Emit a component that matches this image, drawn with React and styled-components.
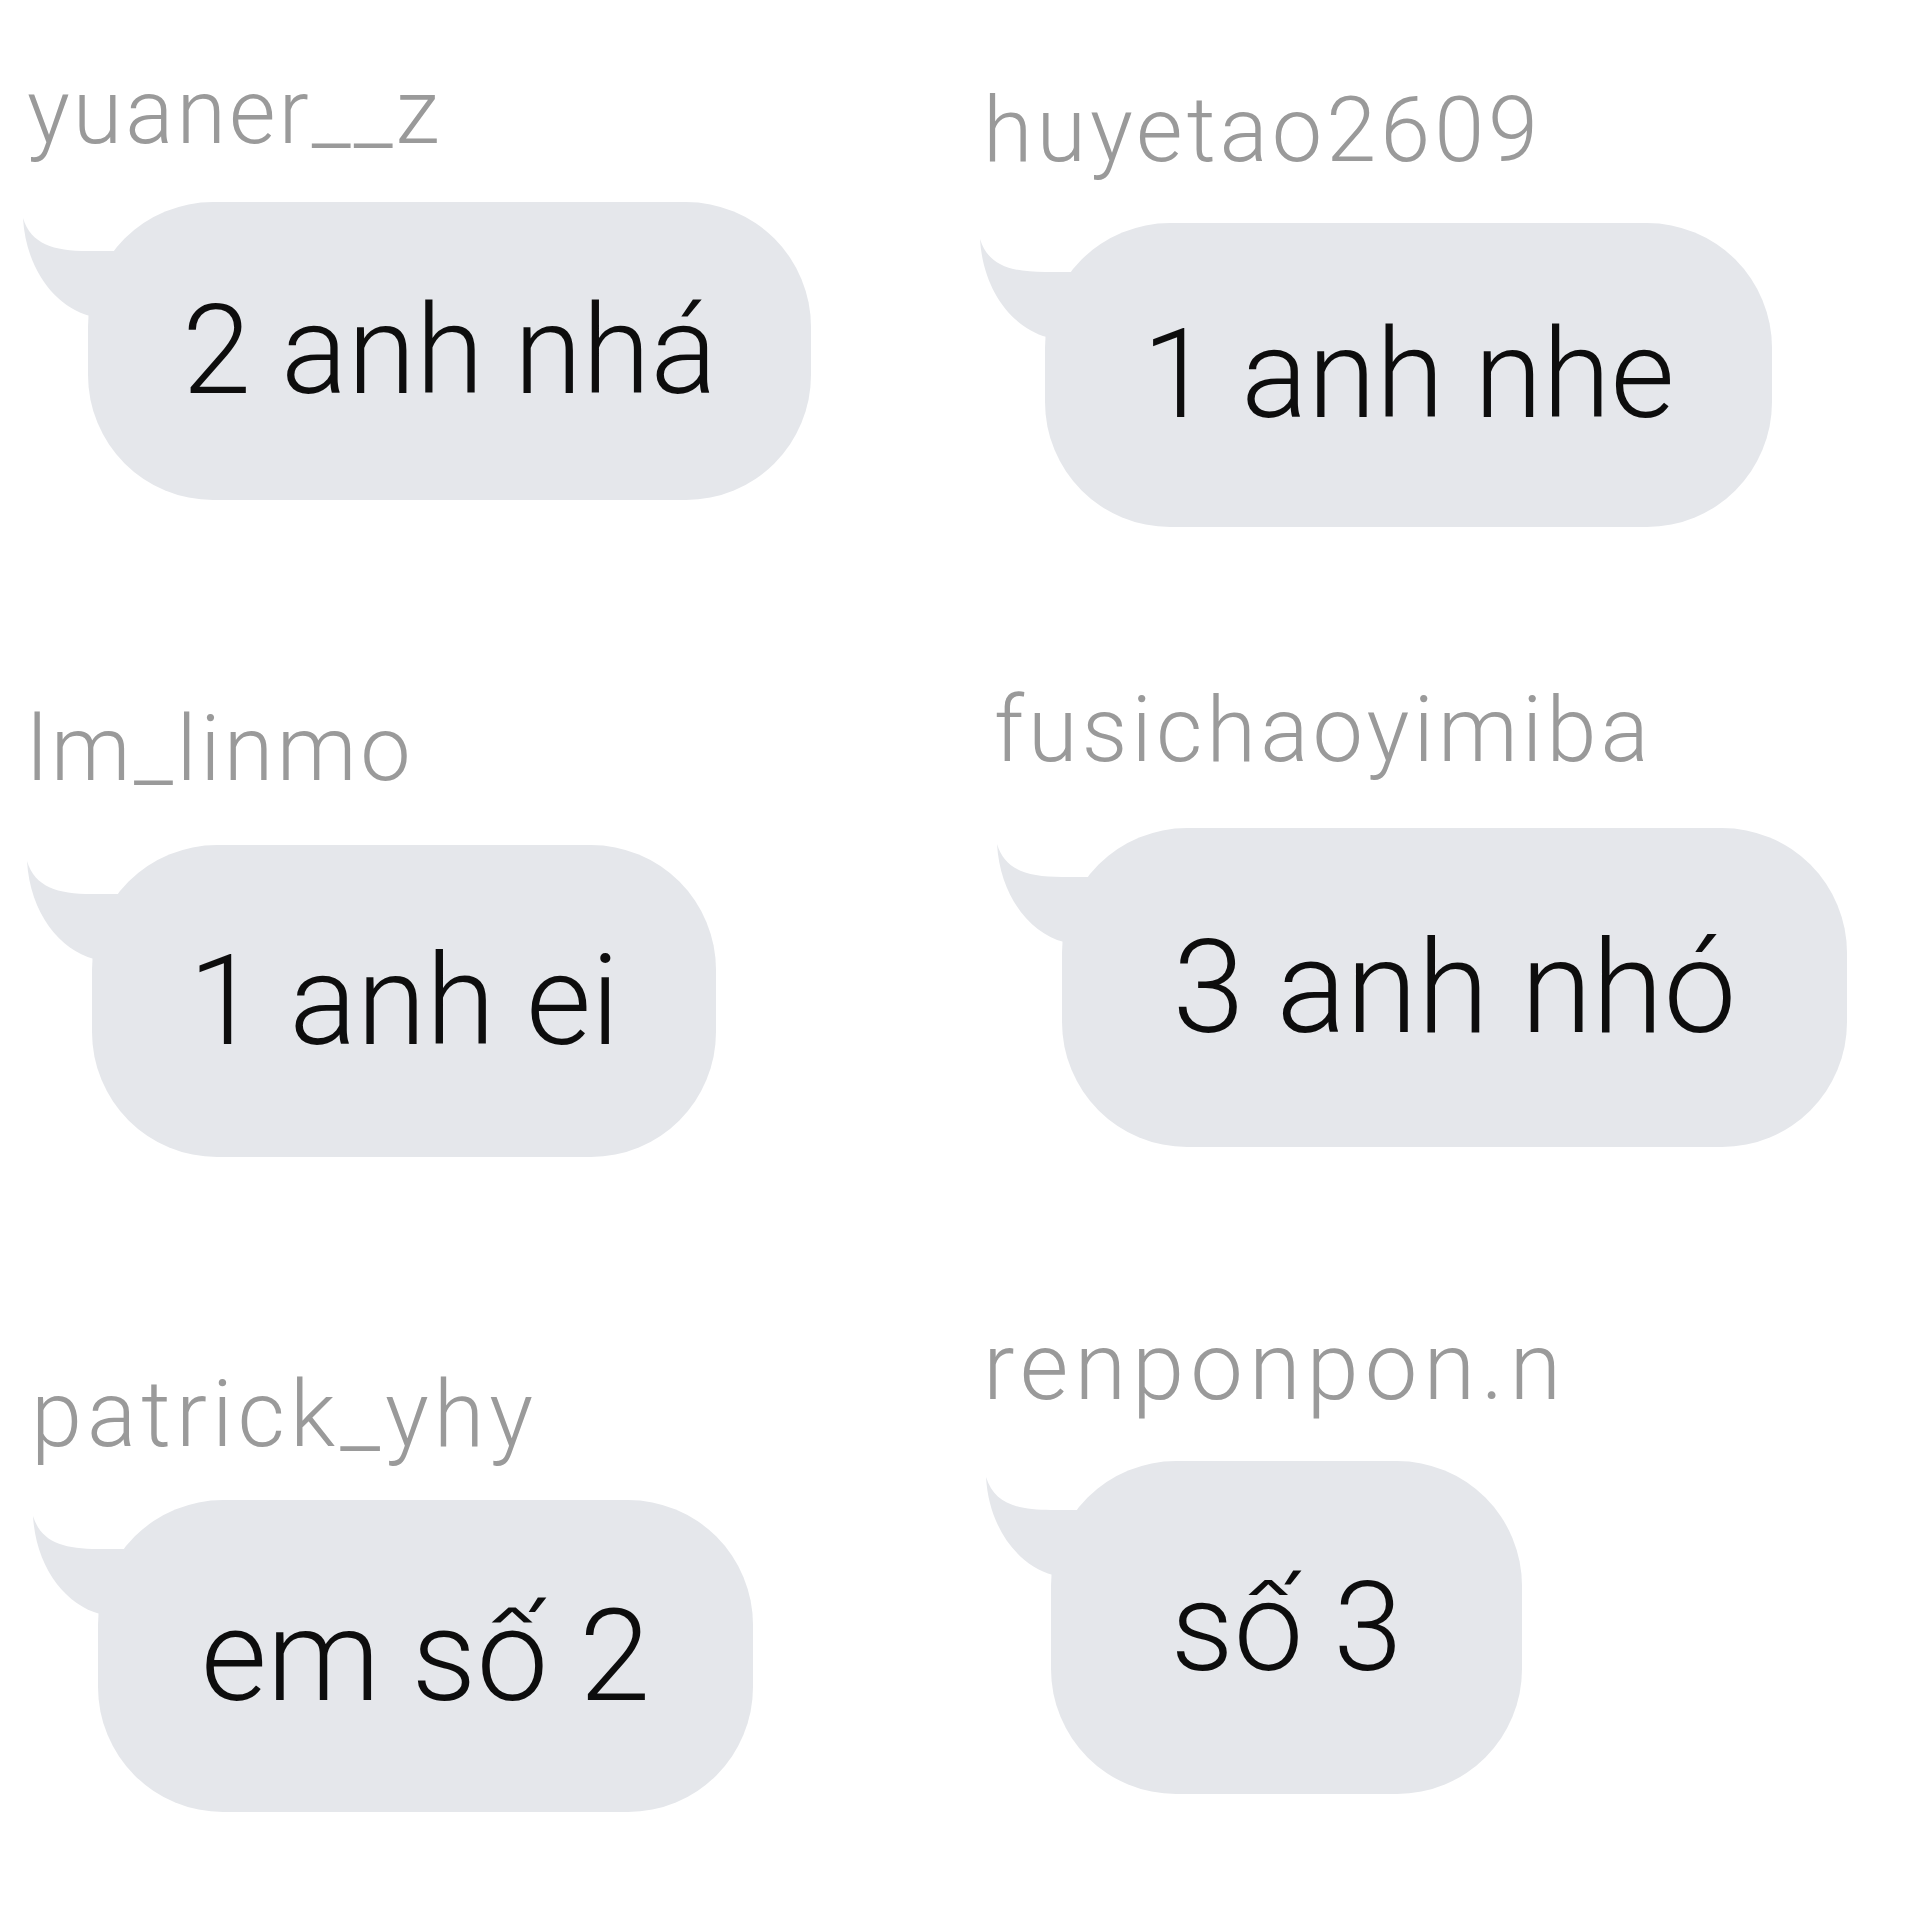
import React from "react";
import styled, { createGlobalStyle } from "styled-components";

const GlobalStyle = createGlobalStyle`
  html, body {
    margin: 0;
    padding: 0;
    background: #ffffff;
  }
  body {
    font-family: Roboto, "Liberation Sans", Arial, sans-serif;
  }
`;

const Pantalla = styled.main`
  width: 1920px;
  height: 1920px;
  display: grid;
  grid-template-columns: 956px 964px;
  grid-template-rows: 640px 640px 640px;
  grid-auto-flow: column;
  background: #ffffff;
  overflow: hidden;
`;

const Celda = styled.section`
  display: flex;
  flex-direction: column;
  align-items: flex-start;
  padding-top: ${(p) => p.$top}px;
`;

const Nombre = styled.div`
  margin-left: ${(p) => p.$left}px;
  font-size: ${(p) => p.$size}px;
  font-weight: 300;
  line-height: 1;
  height: 90px;
  color: #9a9a9a;
  letter-spacing: ${(p) => p.$track}px;
  white-space: nowrap;
`;

const Burbuja = styled.div`
  position: relative;
  margin-left: ${(p) => p.$left}px;
  margin-top: ${(p) => p.$gap}px;
  width: ${(p) => p.$w}px;
  height: ${(p) => p.$h}px;
  box-sizing: border-box;
  border-radius: 125px;
  background: #e5e7eb;
  display: flex;
  align-items: center;
  justify-content: center;
  font-size: ${(p) => p.$size}px;
  font-weight: 300;
  line-height: 1;
  color: #0d0d0d;
  white-space: nowrap;
`;

const Cola = styled.svg`
  position: absolute;
  left: -70px;
  top: 10px;
  width: 120px;
  height: 140px;
  fill: #e5e7eb;
`;

const Texto = styled.span`
  position: relative;
`;

const mensajes = [
  { nombre: "yuaner__z", texto: "2 anh nhá", top: 68, nl: 27, ns: 90, tr: 3, bl: 88, gap: 44, w: 723, h: 298, size: 124 },
  { nombre: "lm_linmo", texto: "1 anh ei", top: 65, nl: 27, ns: 90, tr: 3.5, bl: 92, gap: 50, w: 624, h: 312, size: 126 },
  { nombre: "patrick_yhy", texto: "em số 2", top: 89, nl: 31, ns: 92, tr: 5, bl: 98, gap: 41, w: 655, h: 312, size: 128 },
  { nombre: "huyetao2609", texto: "1 anh nhe", top: 86, nl: 27, ns: 90, tr: 4, bl: 89, gap: 47, w: 727, h: 304, size: 124 },
  { nombre: "fusichaoyimiba", texto: "3 anh nhó", top: 46, nl: 38, ns: 90, tr: 4.2, bl: 106, gap: 52, w: 785, h: 319, size: 130 },
  { nombre: "renponpon.n", texto: "số 3", top: 40, nl: 27, ns: 94, tr: 6, bl: 95, gap: 51, w: 471, h: 333, size: 124 },
];

const App = () => {
  const items = mensajes.map((m, i) => {
    return (
      <Celda key={i} $top={m.top}>
        <Nombre $left={m.nl} $size={m.ns} $track={m.tr}>
          {m.nombre}
        </Nombre>
        <Burbuja $left={m.bl} $gap={m.gap} $w={m.w} $h={m.h} $size={m.size}>
          <Cola viewBox="0 0 120 140">
            <path d="M5 6 C13 32 35 39 70 39 L110 39 L110 140 L72 140 L72 104 C38 95 8 58 5 6 Z" />
          </Cola>
          <Texto>{m.texto}</Texto>
        </Burbuja>
      </Celda>
    );
  });

  return (
    <>
      <GlobalStyle />
      <Pantalla>{items}</Pantalla>
    </>
  );
};

export default App;
